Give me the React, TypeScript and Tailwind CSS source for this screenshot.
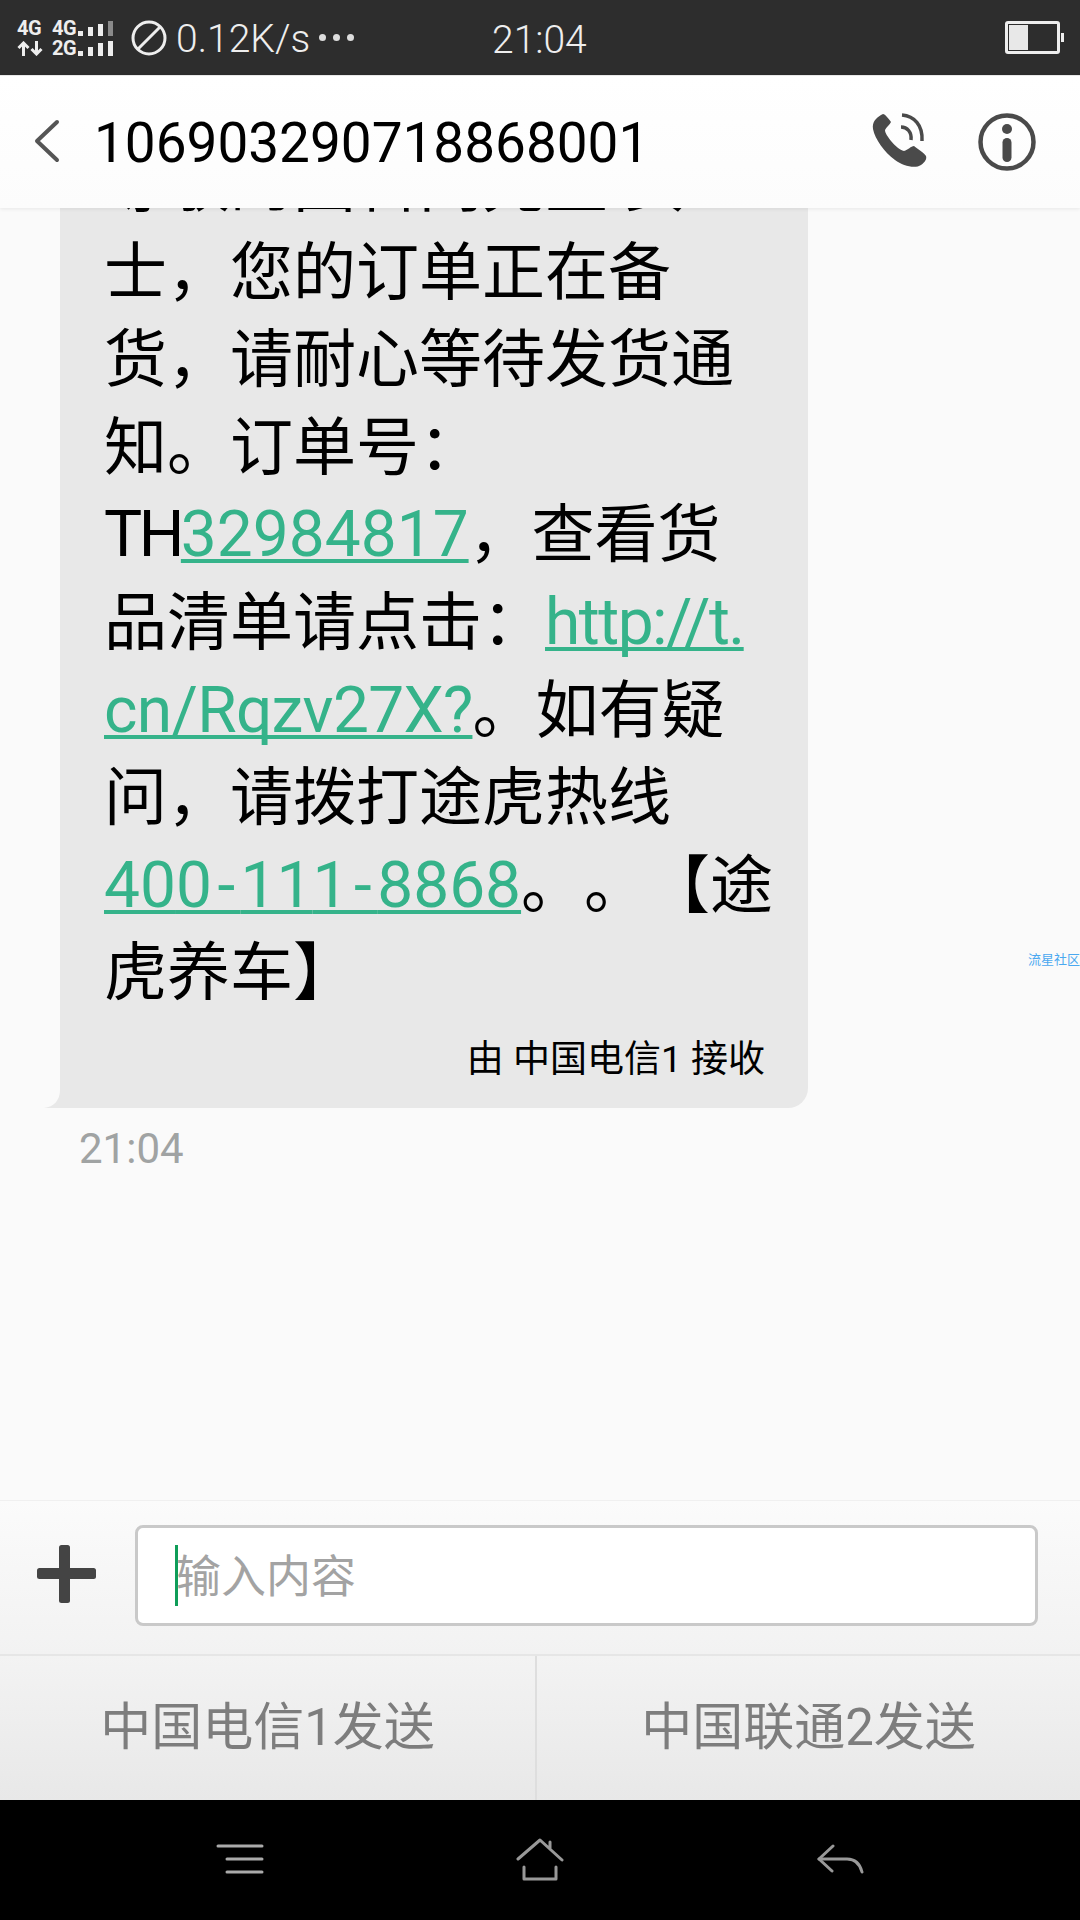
import type { ReactNode } from "react";

function Link({ children, className = "" }: { children: ReactNode; className?: string }) {
  return (
    <span className={`text-[64px] text-[#35b38a] underline decoration-[3.5px] underline-offset-[3px] [text-decoration-skip-ink:none] ${className}`}>
      {children}
    </span>
  );
}

function Bars({ heights, lastDim }: { heights: number[]; lastDim?: boolean }) {
  return (
    <div className="flex items-end gap-[5px] h-[15px] ml-[2px]">
      {heights.map((h, i) => (
        <div
          key={i}
          className={`w-[5px] ${lastDim && i === heights.length - 1 ? "bg-[#8a8a8a]" : "bg-[#eeeeee]"}`}
          style={{ height: h }}
        />
      ))}
    </div>
  );
}

const lines: ReactNode[] = [
  "尊敬的国科网先生 女",
  "士，您的订单正在备",
  "货，请耐心等待发货通",
  "知。订单号：",
  <>
    <span className="text-[64px] tracking-[-3.5px]">TH</span>
    <Link>32984817</Link>，查看货
  </>,
  <>
    品清单请点击：<Link className="tracking-[-1.5px]">http://t.</Link>
  </>,
  <>
    <Link className="tracking-[-0.7px]">cn/Rqzv27X?</Link>。如有疑
  </>,
  "问，请拨打途虎热线",
  <>
    <Link>
      40<span className="tracking-[5.5px]">0-</span>11<span className="tracking-[5.5px]">1-</span>8868
    </Link>
    。。【途
  </>,
  "虎养车】",
];

export default function App() {
  return (
    <div className="w-[1080px] h-[1920px] flex flex-col bg-[#fafafa] font-['Roboto','Noto_Sans_CJK_SC',sans-serif] overflow-hidden">
      {/* status bar */}
      <div className="relative h-[75px] shrink-0 bg-[#2d2d2d] flex items-center text-[#eeeeee] pl-[17px] pr-[16px]">
        <div className="flex flex-col w-[35px] h-[36px] justify-between">
          <span className="text-[20px] leading-[16px] font-bold tracking-[-0.5px]">4G</span>
          <svg width="26" height="15" viewBox="0 0 26 15" fill="none" stroke="#eeeeee" strokeWidth="3">
            <path d="M6.5 15V2M1.5 7l5-5 5 5" />
            <path d="M19.5 0v13M14.5 8l5 5 5-5" />
          </svg>
        </div>
        <div className="flex flex-col h-[36px] justify-between">
          <div className="flex items-end">
            <span className="text-[20px] leading-[16px] font-bold tracking-[-0.5px]">4G</span>
            <Bars heights={[5, 9, 12, 15]} lastDim />
          </div>
          <div className="flex items-end">
            <span className="text-[20px] leading-[16px] font-bold tracking-[-0.5px]">2G</span>
            <Bars heights={[5, 9, 13, 15]} />
          </div>
        </div>
        <svg width="36" height="36" viewBox="0 0 36 36" className="ml-[18px]" fill="none" stroke="#eeeeee" strokeWidth="3">
          <circle cx="18" cy="18" r="16" />
          <path d="M7 29 29 7" />
        </svg>
        <span className="ml-[9px] mt-[3px] text-[39px] leading-none font-light">0.12K/s</span>
        <div className="ml-[9px] flex gap-[7px]">
          <div className="w-[7px] h-[7px] rounded-full bg-[#dddddd]" />
          <div className="w-[7px] h-[7px] rounded-full bg-[#dddddd]" />
          <div className="w-[7px] h-[7px] rounded-full bg-[#dddddd]" />
        </div>
        <span className="absolute left-[492px] top-[18px] text-[39px] leading-[44px] font-light">21:04</span>
        <div className="ml-auto flex items-center">
          <div className="w-[55px] h-[33px] border-[3px] border-[#eeeeee] rounded-[3px] p-[1px] mr-[1px]">
            <div className="w-[19px] h-full bg-[#e8e8e8]" />
          </div>
          <div className="w-[3px] h-[9px] bg-[#eeeeee]" />
        </div>
      </div>

      {/* header */}
      <div className="relative z-10 h-[133px] shrink-0 border-t border-[#e8e8e8] bg-gradient-to-b from-white to-[#fcfcfc] flex items-center shadow-[0_1px_4px_rgba(0,0,0,0.08)]">
        <svg width="26" height="44" viewBox="0 0 26 44" className="ml-[34px] -mt-[2px]" fill="none" stroke="#555555" strokeWidth="4" strokeLinecap="round">
          <path d="M23 3 3 22l20 19" strokeLinejoin="round" />
        </svg>
        <span className="ml-[34px] mt-[2px] text-[54.9px] leading-none text-black">106903290718868001</span>
        <svg width="56" height="56" viewBox="0 0 56 56" className="ml-auto mr-[51px] -mt-[2px]" fill="#4a4a4a">
          <path d="M10 2 C5 5 1 9 2 16 C4 26 13 39 24 47 C32 53 44 56 50 52 C54 49 56 46 55 43 C53 40 47 36 43 33 C40 33 37 37 33 38 C29 37 24 33 20 28 C17 24 14 20 14 17 C15 14 19 12 20 9 C18 6 14 1 12 1 Z" />
          <path d="M31 2 C43 3 52 12 51 28" fill="none" stroke="#4a4a4a" strokeWidth="3.5" />
          <path d="M30 14 C36 14 41 19 40 27" fill="none" stroke="#4a4a4a" strokeWidth="3.5" />
        </svg>
        <svg width="58" height="58" viewBox="0 0 58 58" className="mr-[44px]">
          <circle cx="29" cy="29" r="26.5" fill="none" stroke="#4a4a4a" strokeWidth="4.5" />
          <circle cx="29" cy="16" r="5" fill="#4a4a4a" />
          <rect x="24.5" y="25" width="9" height="24" rx="4.5" fill="#4a4a4a" />
        </svg>
      </div>

      {/* chat */}
      <div className="relative flex-1 min-h-0 flex flex-col justify-end overflow-hidden pb-[326px]">
        <div className="relative shrink-0 ml-[60px] w-[748px] bg-[#e8e8e8] rounded-tr-[20px] rounded-br-[20px] pl-[44px] pr-[36px] pb-[24px]">
          <div className="text-[63px] leading-[87.6px] text-black whitespace-pre [text-spacing-trim:space-all] pb-[6px]">
            {lines.map((line, i) => (
              <div key={i} className="h-[87.6px]">{line}</div>
            ))}
          </div>
          <div className="mt-[13px] pr-[7px] text-right text-[37px] leading-[48px] text-black">由 中国电信1 接收</div>
          <svg width="16" height="18" viewBox="0 0 16 18" className="absolute left-[-16px] bottom-0" fill="#e8e8e8">
            <path d="M16 0 C16 10 10 17 0 18 L16 18 Z" />
          </svg>
        </div>
        <div className="shrink-0 ml-[79px] mt-[16px] text-[42px] leading-[50px] text-[#a0a3a3]">21:04</div>
        <div className="absolute right-0 top-[745px] text-[13px] leading-[14px] text-[#4aa8f0]">流星社区</div>
      </div>

      {/* input */}
      <div className="h-[154px] shrink-0 border-t border-[#f0f0f0] bg-gradient-to-b from-[#fbfbfb] to-[#f2f2f2] flex items-center pl-[37px] pr-[42px] pb-[4px]">
        <svg width="60" height="60" viewBox="0 0 60 60" className="shrink-0 -mt-[3px]" fill="#444444">
          <rect x="22" y="1" width="11" height="58" rx="2.5" />
          <rect x="0" y="24" width="59" height="11" rx="2.5" />
        </svg>
        <div className="ml-[38px] flex-1 h-[101px] bg-white border-[3px] border-[#c9c9c9] rounded-[8px] flex items-center pl-[37px]">
          <div className="w-[3px] h-[61px] bg-[#0f9d58] shrink-0" />
          <span className="text-[45px] leading-[60px] text-[#a3a3a3] -ml-[2px] mt-[4px]">输入内容</span>
        </div>
      </div>

      {/* send buttons */}
      <div className="h-[146px] shrink-0 border-t-2 border-[#e6e6e6] bg-gradient-to-b from-[#f3f3f3] to-[#e8e8e8] flex">
        <div className="w-[537px] flex items-center justify-center border-r-2 border-[#dedede] text-[51px] text-[#7d7d7d]">中国电信1发送</div>
        <div className="flex-1 flex items-center justify-center text-[51px] text-[#7d7d7d]">中国联通2发送</div>
      </div>

      {/* nav */}
      <div className="relative h-[120px] shrink-0 bg-black">
        <svg width="48" height="30" viewBox="0 0 48 30" className="absolute left-[216px] top-[44px]" fill="none" stroke="#aaaaaa" strokeWidth="3" strokeLinecap="round">
          <path d="M2 2h44M11 15h35M11 28h35" />
        </svg>
        <svg width="48" height="44" viewBox="0 0 48 44" className="absolute left-[516px] top-[38px]" fill="none" stroke="#999999" strokeWidth="3" strokeLinecap="round" strokeLinejoin="round">
          <path d="M2 21 24 2l22 20M34 10V4" />
          <path d="M8 29v12h32V29" />
        </svg>
        <svg width="48" height="32" viewBox="0 0 48 32" className="absolute left-[816px] top-[44px]" fill="none" stroke="#999999" strokeWidth="3" strokeLinecap="round" strokeLinejoin="round">
          <path d="M17 2 3 15l13 12" />
          <path d="M3 15h28c8 0 13 5 15 13" />
        </svg>
      </div>
    </div>
  );
}
